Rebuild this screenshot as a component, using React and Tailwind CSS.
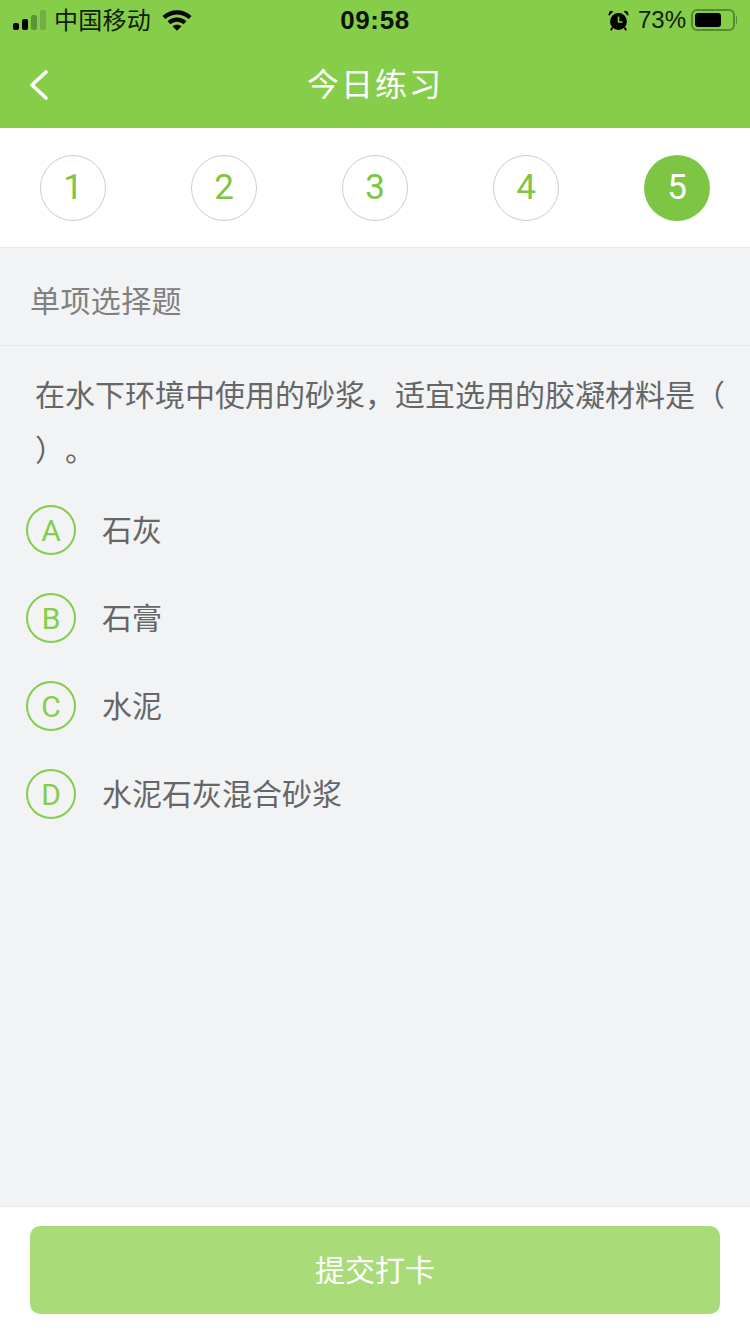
const steps = [1, 2, 3, 4, 5];

const options = [
  { key: "A", text: "石灰" },
  { key: "B", text: "石膏" },
  { key: "C", text: "水泥" },
  { key: "D", text: "水泥石灰混合砂浆" },
];

const cjk = "font-['Liberation_Sans','Noto_Sans_CJK_SC',sans-serif]";

function SignalBars() {
  return (
    <div className="flex items-end gap-[3px] h-[21px] mb-[1px]">
      <div className="w-[6px] h-[7px] rounded-[2px] bg-black" />
      <div className="w-[6px] h-[11px] rounded-[2px] bg-black" />
      <div className="w-[6px] h-[15px] rounded-[2px] bg-[#5a9434]" />
      <div className="w-[6px] h-[20px] rounded-[2px] bg-[#70b042]" />
    </div>
  );
}

function WifiIcon() {
  return (
    <svg width="30" height="22" viewBox="0 0 30 22" className="ml-[11px]">
      <path d="M0.5 7C8.6 -0.6 21.4 -0.6 29.5 7L26.6 10C20 4 10 4 3.4 10Z" fill="#000" />
      <path d="M5.6 12.2C11 7.4 19 7.4 24.4 12.2L21.6 15.2C17.8 11.8 12.2 11.8 8.4 15.2Z" fill="#000" />
      <path d="M10.6 17.2C13.2 15.2 16.8 15.2 19.4 17.2L15 21.8Z" fill="#000" />
    </svg>
  );
}

function AlarmIcon() {
  return (
    <svg width="21" height="21" viewBox="0 0 21 21">
      <circle cx="10.5" cy="11.5" r="8.4" fill="#000" />
      <path d="M0.8 6L5.4 1.6L2.8 0.8C1.2 1.2 0.2 3.6 0.8 6Z" fill="#000" />
      <path d="M20.2 6L15.6 1.6L18.2 0.8C19.8 1.2 20.8 3.6 20.2 6Z" fill="#000" />
      <path d="M4.5 17.5L2.8 20.4M16.5 17.5L18.2 20.4" stroke="#000" strokeWidth="1.8" />
      <path d="M10.5 6.5V12H14.5" stroke="#86cd4a" strokeWidth="1.6" fill="none" />
    </svg>
  );
}

function Battery() {
  return (
    <div className="flex items-center ml-[5px]">
      <div className="w-[44px] h-[22px] rounded-[6px] border-2 border-[#558c30] p-[2px] flex">
        <div className="w-[26px] h-full rounded-[3px] bg-black" />
      </div>
      <div className="w-[1px] h-[8px] ml-[1px] rounded-r bg-[#558c30]" />
    </div>
  );
}

export default function App() {
  return (
    <div className={`${cjk} w-[750px] h-[1334px] flex flex-col bg-[#f2f3f5] overflow-hidden`}>
      {/* Header */}
      <div className="bg-[#86cd4a] h-[128px] flex-none">
        <div className="h-[40px] pl-[13px] pr-[13px] grid grid-cols-[1fr_auto_1fr] items-center">
          <div className="flex items-center">
            <SignalBars />
            <span className="ml-[8px] pt-[2px] text-[24px] leading-[38px] tracking-[0.25px] text-[#10200a]">中国移动</span>
            <WifiIcon />
          </div>
          <span className="pt-[1px] text-[26px] leading-[39px] font-bold tracking-[0.6px] text-[#0a1405]">09:58</span>
          <div className="flex items-center justify-end">
            <AlarmIcon />
            <span className="ml-[9px] text-[24px] leading-[40px] text-[#10200a]">73%</span>
            <Battery />
          </div>
        </div>
        <div className="h-[88px] pt-[2px] px-[30px] grid grid-cols-[1fr_auto_1fr] items-center">
          <svg width="20" height="32" viewBox="0 0 20 32" fill="none" className="-ml-[1px]">
            <path d="M17 3L3 16L17 29" stroke="#fff" strokeWidth="3.6" strokeLinecap="round" strokeLinejoin="round" />
          </svg>
          <span className="text-[32px] leading-[44px] tracking-[2px] text-white">今日练习</span>
          <div />
        </div>
      </div>

      {/* Steps */}
      <div className="flex-none h-[120px] pt-[27px] px-[40px] bg-white border-b border-[#e8e8e8] flex justify-between items-start">
        {steps.map((n) =>
          n === 5 ? (
            <div key={n} className="w-[66px] h-[66px] pt-[1px] rounded-full bg-[#7dc644] text-white text-[35px] font-['Roboto'] font-normal flex items-center justify-center">
              {n}
            </div>
          ) : (
            <div key={n} className="w-[66px] h-[66px] pt-[1px] rounded-full border border-[#cccccc] text-[#7dc644] text-[35px] font-['Roboto'] font-normal flex items-center justify-center">
              {n}
            </div>
          )
        )}
      </div>

      {/* Question type */}
      <div className="flex-none h-[98px] pl-[30px] pt-[10px] border-b border-[#e6e7e9] flex items-center text-[30px] tracking-[0.4px] text-[#808080]">
        单项选择题
      </div>

      {/* Question */}
      <div className="flex-none pt-[22px] pl-[35px] pr-[20px] text-[30px] leading-[55px] text-[#666666] [text-spacing-trim:space-all]">
        在水下环境中使用的砂浆，适宜选用的胶凝材料是（ ）。
      </div>

      {/* Options */}
      <div className="flex-none pt-[27px] pl-[26px] flex flex-col gap-[38px]">
        {options.map((o) => (
          <div key={o.key} className="flex items-center h-[50px]">
            <div className="w-[50px] h-[50px] pt-[1px] rounded-full border-2 border-[#86cd4a] text-[#86cd4a] text-[30px] font-['Roboto'] font-normal flex items-center justify-center">
              {o.key}
            </div>
            <span className="ml-[26px] text-[30px] text-[#666666]">{o.text}</span>
          </div>
        ))}
      </div>

      <div className="flex-1" />

      {/* Footer */}
      <div className="flex-none h-[128px] bg-white border-t border-[#e8e9eb] pt-[19px] px-[30px]">
        <button className="w-full h-[88px] rounded-[10px] bg-[#a9dc78] text-white text-[30px]">
          提交打卡
        </button>
      </div>
    </div>
  );
}
